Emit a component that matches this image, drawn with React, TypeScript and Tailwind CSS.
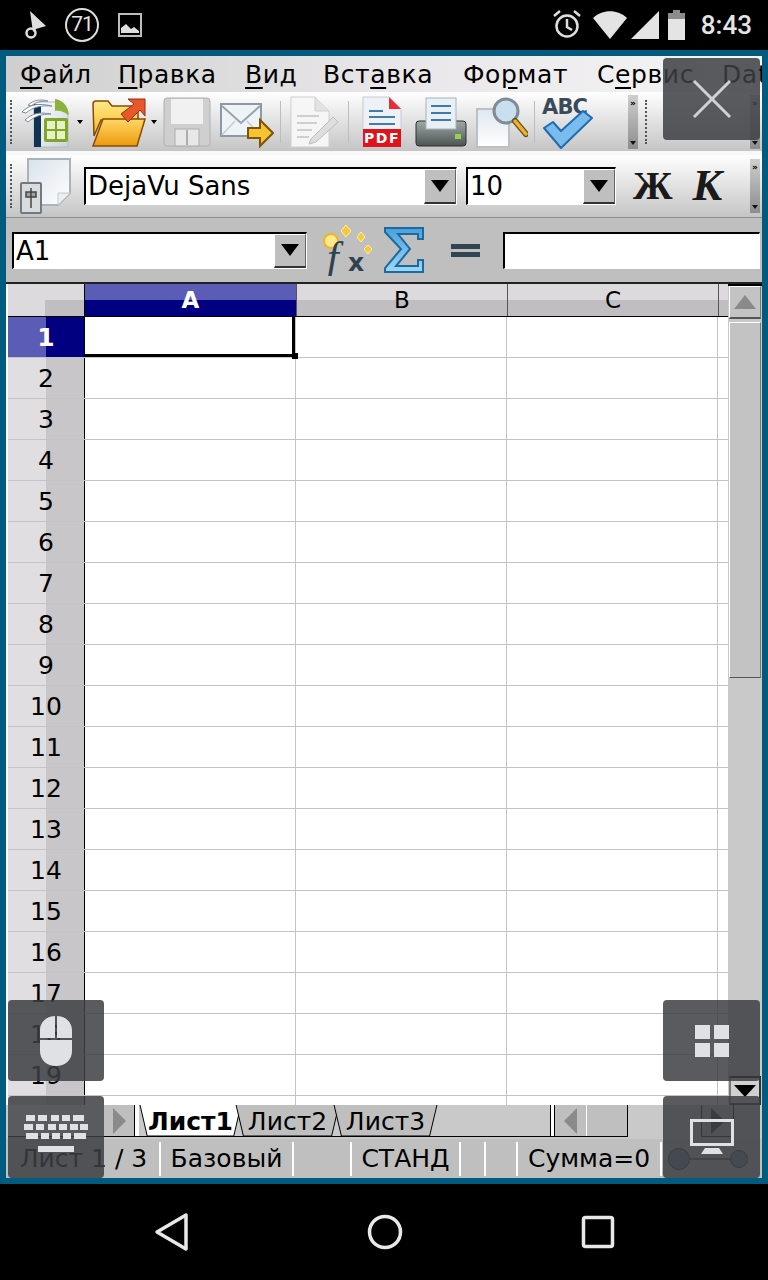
import React from 'react';

const font = 'font-["DejaVu_Sans",sans-serif]';

const rows = Array.from({ length: 20 }, (_, i) => i + 1);

const GridLine = () => <div className="w-[1px] self-stretch bg-[#c4c4c4]" />;

const Triangle = () => (
  <svg width="20" height="14" viewBox="0 0 20 14">
    <path d="M1 1h18L10 13z" fill="#000" />
  </svg>
);

const ComboBox = ({ text, className }: { text: string; className: string }) => (
  <div className={`flex items-stretch border border-t-2 border-l-2 border-t-black border-l-black border-r-white border-b-white bg-white ${className}`}>
    <span className="flex-1 truncate pl-[2px] text-[26px] leading-[34px] text-black">{text}</span>
    <div className="flex w-[32px] items-center justify-center border-b-2 border-r border-t border-l border-b-[#333] border-r-[#666] border-t-white border-l-white bg-[#c0bfc0]">
      <Triangle />
    </div>
  </div>
);

const Grip = () => (
  <div className="h-[44px] w-[2px] border-l-2 border-dotted border-[#555]" />
);

const Sep = () => <div className="h-[42px] w-[1px] bg-[#bdbdbd]" />;

const Overflow = ({ className }: { className: string }) => (
  <div className={`flex w-[10px] flex-col items-center justify-between bg-gradient-to-b from-[#cfcfcf] to-[#8d8d8d] py-[4px] ${className}`}>
    <span className="text-[9px] font-bold leading-[9px] text-black">»</span>
    <svg width="6" height="4" viewBox="0 0 6 4"><path d="M0 0h6L3 4z" fill="#111" /></svg>
  </div>
);

const NewIcon = () => (
  <svg width="52" height="52" viewBox="0 0 52 52">
    <defs>
      <linearGradient id="newPage" x1="0" y1="0" x2="1" y2="1"><stop offset="0" stopColor="#fff" /><stop offset="1" stopColor="#c9d4dc" /></linearGradient>
    </defs>
    <path d="M14 6h22l12 13v32H14z" fill="url(#newPage)" stroke="#b5bcc2" />
    <path d="M14 8h7v43h-7z" fill="#0f3350" />
    <path d="M35 3c8 1 13 7 14 16-5-3-9-5-14-4z" fill="#8bb23c" />
    <path d="M2 16c8-8 16-9 30-6-10-1-19 1-26 7zM5 24c8-7 14-8 26-6-9 0-16 2-23 8zM8 9c6-5 12-6 20-4-7 0-12 1-17 5z" fill="#fff" stroke="#7e8e9c" strokeWidth="1" />
    <rect x="24" y="22" width="24" height="24" rx="2" fill="#7fa52c" />
    <path d="M27 25h8v8h-8zM37 25h8v8h-8zM27 35h8v8h-8zM37 35h8v8h-8z" fill="#e6f1c4" />
  </svg>
);

const FolderIcon = () => (
  <svg width="56" height="52" viewBox="0 0 56 52">
    <defs>
      <linearGradient id="folderA" x1="0" y1="0" x2="0" y2="1"><stop offset="0" stopColor="#ffe98a" /><stop offset="1" stopColor="#f5b81f" /></linearGradient>
      <linearGradient id="folderB" x1="0" y1="0" x2="0" y2="1"><stop offset="0" stopColor="#ffd765" /><stop offset="1" stopColor="#eb9a0d" /></linearGradient>
    </defs>
    <path d="M2 8c0-2 1-3 3-3h12l4 5h26v14H10L3 40z" fill="url(#folderA)" stroke="#8a4a05" strokeWidth="1.5" />
    <path d="M12 23h42l-8 27H2z" fill="url(#folderB)" stroke="#8a4a05" strokeWidth="1.5" />
    <path d="M30 18L43 8l-6-5h17v17l-5-6-12 12z" fill="#e8572a" stroke="#9a2c10" strokeWidth="1" />
  </svg>
);

const SaveIcon = () => (
  <svg width="48" height="50" viewBox="0 0 48 50">
    <rect x="1" y="1" width="46" height="48" rx="3" fill="#cfcfcf" stroke="#b0b0b0" />
    <rect x="8" y="2" width="32" height="25" fill="#f1f1f1" />
    <rect x="12" y="32" width="24" height="17" fill="#e8e8e8" stroke="#adadad" />
    <rect x="23" y="33" width="2" height="15" fill="#adadad" />
  </svg>
);

const MailIcon = () => (
  <svg width="54" height="46" viewBox="0 0 54 46">
    <rect x="1" y="1" width="40" height="32" fill="#eef3f7" stroke="#8c98a2" strokeWidth="2" />
    <path d="M2 3l19 17L40 3" fill="none" stroke="#98a4ae" strokeWidth="2" />
    <path d="M2 32l13-14M40 32L27 18" fill="none" stroke="#c4ccd2" strokeWidth="1.5" />
    <path d="M28 25h12v-8l13 13-13 13v-8H28z" fill="#f7c32f" stroke="#7e5408" strokeWidth="2" />
  </svg>
);

const EditIcon = () => (
  <svg width="50" height="52" viewBox="0 0 50 52">
    <path d="M2 1h24l14 14v36H2z" fill="#f6f6f6" stroke="#cfcfcf" />
    <path d="M26 1v14h14" fill="#e3e3e3" stroke="#cfcfcf" />
    <path d="M8 20h22M8 27h20M8 34h15M8 41h12" stroke="#cfcfcf" strokeWidth="2" />
    <path d="M22 43l22-22 5 5-22 20-7 2z" fill="#dedede" stroke="#bdbdbd" />
  </svg>
);

const PdfIcon = () => (
  <svg width="40" height="52" viewBox="0 0 40 52">
    <path d="M1 1h26l12 12v38H1z" fill="#eef2f6" stroke="#c5ccd2" />
    <path d="M27 1l12 12H27z" fill="#ea2d3a" />
    <path d="M7 15h14M7 21h26M7 28h26" stroke="#3d7eae" strokeWidth="2" />
    <rect x="1" y="33" width="38" height="18" fill="#e0131d" />
    <text x="20" y="47" textAnchor="middle" fontSize="14" fontWeight="700" letterSpacing="1.5" fill="#fff" fontFamily="DejaVu Sans">PDF</text>
  </svg>
);

const PrintIcon = () => (
  <svg width="52" height="50" viewBox="0 0 52 50">
    <defs>
      <linearGradient id="printBody" x1="0" y1="0" x2="0" y2="1"><stop offset="0" stopColor="#a2aaa8" /><stop offset="1" stopColor="#4c5352" /></linearGradient>
    </defs>
    <rect x="1" y="24" width="50" height="25" rx="3" fill="url(#printBody)" stroke="#2c3130" />
    <rect x="11" y="1" width="30" height="31" fill="#e8f0f6" stroke="#a8b2ba" />
    <path d="M16 9h20M16 16h20M16 23h20" stroke="#3f7aa8" strokeWidth="2" />
    <rect x="40" y="37" width="6" height="5" fill="#96d14c" />
  </svg>
);

const PreviewIcon = () => (
  <svg width="52" height="52" viewBox="0 0 52 52">
    <defs>
      <linearGradient id="previewPage" x1="0" y1="0" x2="0" y2="1"><stop offset="0" stopColor="#dfe8f0" /><stop offset="1" stopColor="#fff" /></linearGradient>
    </defs>
    <rect x="1" y="13" width="32" height="38" fill="url(#previewPage)" stroke="#b9c0c6" strokeWidth="2" />
    <circle cx="30" cy="15" r="12" fill="#c9dff0" stroke="#7f8b95" strokeWidth="3" />
    <path d="M39 25l11 13" stroke="#5d4a14" strokeWidth="6" strokeLinecap="round" />
    <path d="M39 25l11 13" stroke="#eeb02c" strokeWidth="3.5" strokeLinecap="round" />
  </svg>
);

const SpellIcon = () => (
  <svg width="54" height="54" viewBox="0 0 54 54">
    <text x="2" y="19" fontSize="21" fontWeight="700" fill="#3a4a5a" fontFamily="DejaVu Sans" textLength="46">ABC</text>
    <path d="M4 33l9-6 8 9L43 16l9 7-31 30z" fill="#7bbcee" stroke="#1f6cb0" strokeWidth="2" strokeLinejoin="round" />
  </svg>
);

const AttrIcon = () => (
  <svg width="54" height="56" viewBox="0 0 54 56">
    <defs>
      <linearGradient id="attrPage" x1="0" y1="0" x2="1" y2="1"><stop offset="0" stopColor="#d9e2ea" /><stop offset="1" stopColor="#fff" /></linearGradient>
    </defs>
    <path d="M8 1h42v34L38 47H8z" fill="url(#attrPage)" stroke="#aab3ba" strokeWidth="2" />
    <path d="M50 35H38v12z" fill="#eceff1" stroke="#c4cad0" />
    <rect x="1" y="25" width="20" height="30" rx="1" fill="#d9dcdd" stroke="#707a80" strokeWidth="2" />
    <path d="M11 30v20M6 34h10v5H6z" fill="#9aa2a6" stroke="#444" strokeWidth="1.5" />
  </svg>
);

const FxIcon = () => (
  <svg width="50" height="52" viewBox="0 0 50 52">
    <circle cx="9" cy="17" r="7" fill="#ffe98a" stroke="#eeb52b" strokeWidth="2" />
    <path d="M24 1l5 6-5 6-5-6zM39 8l4 5-4 5-4-5zM46 21l4 4-4 5-4-5z" fill="#f7c936" stroke="#fff0a8" />
    <text x="5" y="47" fontSize="42" fontStyle="italic" fontFamily="Liberation Serif" fill="#2e4250">f</text>
    <text x="26" y="47" fontSize="25" fontWeight="700" fontFamily="DejaVu Sans" fill="#2e4250">x</text>
  </svg>
);

const SigmaIcon = () => (
  <svg width="40" height="46" viewBox="0 0 40 46">
    <defs>
      <linearGradient id="sigmaFill" x1="0" y1="0" x2="0" y2="1"><stop offset="0" stopColor="#47a1dd" /><stop offset="1" stopColor="#9ed7fa" /></linearGradient>
    </defs>
    <path d="M1 1h38v11h-5V7H14l12 15-14 17h22v-6h5v12H1v-4l16-19L1 5z" fill="url(#sigmaFill)" stroke="#1c6a9e" strokeWidth="2" />
  </svg>
);

const MouseIcon = () => (
  <svg width="34" height="52" viewBox="0 0 34 52">
    <path d="M16 1v22H1v-8C1 7 8 1 16 1zM18 1c8 0 15 6 15 14v8H18zM1 25h32v11c0 9-7 15-16 15S1 45 1 36z" fill="#dfe1e4" />
  </svg>
);

const KeyboardIcon = () => (
  <svg width="64" height="44" viewBox="0 0 64 44">
    <path d="M2 0h9v6H2zM14 0h9v6h-9zM27 0h8v6h-8zM38 0h8v6h-8zM49 0h11v6H49zM0 9h9v6H0zM12 9h8v6h-8zM24 9h8v6h-8zM35 9h8v6h-8zM46 9h8v6h-8zM56 9h8v6h-8zM2 18h12v6H2zM17 18h8v6h-8zM28 18h8v6h-8zM39 18h8v6h-8zM50 18h12v6H50zM14 31h36v6H14z" fill="#dfe1e4" />
  </svg>
);

const MonitorIcon = () => (
  <svg width="44" height="36" viewBox="0 0 44 36">
    <rect x="1.5" y="1.5" width="41" height="24" fill="none" stroke="#dfe1e4" strokeWidth="3" />
    <path d="M11 35l4-6h14l4 6z" fill="#dfe1e4" />
  </svg>
);

const Overlay = ({ className, children }: { className: string; children: React.ReactNode }) => (
  <div className={`absolute flex items-center justify-center rounded-[4px] bg-[#3c3e42]/85 ${className}`}>{children}</div>
);

const Tab = ({ label, active, width }: { label: string; active?: boolean; width: string }) => (
  <div className={`relative -mr-[7px] flex h-[32px] items-center justify-center ${width}`}>
    <svg className="absolute inset-0 h-full w-full" viewBox="0 0 100 32" preserveAspectRatio="none">
      <path d="M1 0L8 31H92L99 0" fill={active ? '#fff' : '#c0bfc0'} stroke="#000" strokeWidth="1" vectorEffect="non-scaling-stroke" />
    </svg>
    <span className={`relative text-[25px] leading-none text-black ${active ? 'font-bold' : ''}`}>{label}</span>
  </div>
);

const StatusCell = ({ width, children }: { width: string; children?: React.ReactNode }) => (
  <div className={`flex h-[34px] shrink-0 items-center justify-center border-r-2 border-white text-[25px] leading-none text-black ${width}`}>{children}</div>
);

const MenuItem = ({ before, mark, after, width }: { before?: string; mark: string; after: string; width: string }) => (
  <span className={`shrink-0 whitespace-nowrap ${width}`}>
    {before}<span className="underline decoration-2 underline-offset-[4px]">{mark}</span>{after}
  </span>
);

export default function App() {
  return (
    <div className={`relative h-[1280px] w-[768px] overflow-hidden bg-black ${font}`}>
      {/* android status bar */}
      <div className="flex h-[50px] items-center pl-[24px] pr-[16px] font-['Roboto',sans-serif] text-[#e4e4e4]">
        <svg width="24" height="30" viewBox="0 0 24 30">
          <path d="M6 1l16 15-10 3-3 3z" fill="#dedede" />
          <circle cx="7" cy="23" r="4.5" fill="none" stroke="#dedede" strokeWidth="2.5" />
        </svg>
        <div className="ml-[17px] flex h-[34px] w-[34px] items-center justify-center rounded-full border-2 border-[#dedede] text-[21px] tracking-[-1px]">71</div>
        <svg className="ml-[19px]" width="24" height="24" viewBox="0 0 24 24">
          <rect x="1" y="1" width="22" height="22" fill="none" stroke="#bdbdbd" strokeWidth="2" />
          <path d="M3 20v-5l5-4 5 5 3-2 5 4v2z" fill="#dedede" />
        </svg>
        <svg className="ml-auto" width="28" height="30" viewBox="0 0 28 30">
          <circle cx="14" cy="16" r="10.5" fill="none" stroke="#dedede" strokeWidth="2.5" />
          <path d="M14 9v8l5 3M1 6l6-5M27 6l-6-5" fill="none" stroke="#dedede" strokeWidth="2.5" />
        </svg>
        <svg className="ml-[12px]" width="34" height="28" viewBox="0 0 34 28"><path d="M0 7C9-2 25-2 34 7L17 28z" fill="#e4e4e4" /></svg>
        <svg className="ml-[4px]" width="28" height="28" viewBox="0 0 28 28"><path d="M0 28L28 0v28z" fill="#e4e4e4" /></svg>
        <svg className="ml-[8px]" width="20" height="30" viewBox="0 0 20 30">
          <path d="M6 0h7v3h5v27H1V3h5z" fill="#e4e4e4" />
          <path d="M6 0h7v3h5v6H1V3h5z" fill="#8c8c8c" />
        </svg>
        <span className="ml-[14px] text-[26px] font-medium leading-none">8:43</span>
      </div>

      {/* libreoffice window */}
      <div className="h-[1134px] bg-[#005b7f] p-[6px]">
        <div className="flex h-full flex-col overflow-hidden bg-[#c0bfc0]">
          <div className="flex h-[36px] shrink-0 items-center overflow-hidden bg-gradient-to-r from-[#cfcfcf] via-[#e8e6e8] to-[#f6f5f6] pl-[14px] text-[25px] leading-none tracking-[0.6px] text-black">
            <MenuItem mark="Ф" after="айл" width="w-[98px]" />
            <MenuItem mark="П" after="равка" width="w-[127px]" />
            <MenuItem mark="В" after="ид" width="w-[78px]" />
            <MenuItem before="Вст" mark="а" after="вка" width="w-[140px]" />
            <MenuItem before="Фо" mark="р" after="мат" width="w-[134px]" />
            <MenuItem before="С" mark="е" after="рвис" width="w-[125px]" />
            <MenuItem before="Dat" mark="a" after="" width="w-[60px]" />
          </div>

          <div className="flex h-[63px] shrink-0 items-center border-b-[4px] border-[#f8f8f8] bg-gradient-to-b from-[#ffffff] to-[#c6c5c6] pl-[4px] relative">
            <Grip />
            <div className="ml-[8px]"><NewIcon /></div>
            <svg className="ml-[5px]" width="6" height="4" viewBox="0 0 6 4"><path d="M0 0h6L3 4z" /></svg>
            <div className="ml-[8px]"><FolderIcon /></div>
            <svg className="ml-[4px]" width="6" height="4" viewBox="0 0 6 4"><path d="M0 0h6L3 4z" /></svg>
            <div className="ml-[6px]"><SaveIcon /></div>
            <div className="ml-[9px] mt-[8px]"><MailIcon /></div>
            <div className="ml-[6px]"><Sep /></div>
            <div className="ml-[8px]"><EditIcon /></div>
            <div className="ml-[9px]"><Sep /></div>
            <div className="ml-[13px]"><PdfIcon /></div>
            <div className="ml-[13px]"><PrintIcon /></div>
            <div className="ml-[9px]"><PreviewIcon /></div>
            <div className="ml-[6px]"><Sep /></div>
            <div className="ml-[5px]"><SpellIcon /></div>
            <Overflow className="ml-[34px] h-[54px]" />
            <div className="ml-[7px]"><Grip /></div>
            <Overflow className="ml-auto mr-[2px] h-[54px]" />
          </div>

          <div className="flex h-[63px] shrink-0 items-center border-b border-[#8e8e8e] bg-gradient-to-b from-[#ffffff] to-[#c6c5c6] pl-[4px]">
            <Grip />
            <div className="ml-[8px]"><AttrIcon /></div>
            <ComboBox text="DejaVu Sans" className="ml-[10px] h-[38px] w-[373px]" />
            <ComboBox text="10" className="ml-[9px] h-[38px] w-[150px]" />
            <span className="ml-[17px] font-['Liberation_Serif',serif] text-[40px] font-bold leading-none text-[#1a1a1a]">Ж</span>
            <span className="ml-[20px] font-['Liberation_Serif',serif] text-[44px] font-bold italic leading-none text-[#1a1a1a]">К</span>
            <Overflow className="ml-auto mr-[2px] h-[54px]" />
          </div>

          <div className="flex h-[66px] shrink-0 items-center border-b-2 border-[#222] bg-[#c0bfc0] pl-[6px]">
            <ComboBox text="A1" className="h-[37px] w-[295px]" />
            <div className="ml-[15px]"><FxIcon /></div>
            <div className="ml-[12px]"><SigmaIcon /></div>
            <div className="ml-[27px] flex w-[29px] flex-col gap-[3px]">
              <div className="h-[5px] bg-[#31444f]" />
              <div className="h-[5px] bg-[#31444f]" />
            </div>
            <div className="ml-[23px] h-[37px] w-[257px] border border-t-2 border-l-2 border-t-black border-l-black border-r-white border-b-white bg-white" />
          </div>

          {/* sheet */}
          <div className="flex h-[821px] shrink-0 overflow-hidden bg-white pl-[2px]">
            <div className="flex w-[720px] shrink-0 flex-col overflow-hidden">
              <div className="flex h-[33px] shrink-0 border-b border-black text-[23px] leading-none">
                <div className="relative w-[77px] shrink-0 border-r border-black bg-[#dcdadc]">
                  <div className="absolute bottom-0 right-0 h-[16px] w-[39px] bg-[#c0bec0]" />
                </div>
                <div className="relative flex w-[211px] shrink-0 items-center justify-center bg-[linear-gradient(#5a5cb5_50%,#000080_50%)] font-bold text-white">A</div>
                <div className="flex w-[211px] shrink-0 items-center justify-center border-l border-[#555] bg-[linear-gradient(#dcdadc_50%,#c0bec0_50%)] text-black">B</div>
                <div className="flex w-[211px] shrink-0 items-center justify-center border-l border-[#555] bg-[linear-gradient(#dcdadc_50%,#c0bec0_50%)] text-black">C</div>
                <div className="flex-1 border-l border-[#555] bg-[linear-gradient(#dcdadc_50%,#c0bec0_50%)]" />
              </div>
              {rows.map((row) => (
                <div key={row} className="flex h-[41px] shrink-0 border-b border-[#c4c4c4]">
                  <div className={`flex w-[77px] shrink-0 items-center justify-center border-r border-black text-[25px] leading-none ${row === 1 ? 'bg-[linear-gradient(90deg,#5a5cb5_50%,#000080_50%)] font-bold text-white' : 'bg-[linear-gradient(90deg,#e0dee0_50%,#c8c6c8_50%)] text-black'}`}>
                    {row}
                  </div>
                  <div className={`relative w-[210px] shrink-0 ${row === 1 ? 'border-b-[3px] border-r-[3px] border-black' : ''}`}>
                    {row === 1 && <div className="absolute -bottom-[5px] -right-[6px] h-[6px] w-[6px] bg-black" />}
                  </div>
                  <GridLine />
                  <div className="w-[210px] shrink-0" />
                  <GridLine />
                  <div className="w-[210px] shrink-0" />
                  <GridLine />
                </div>
              ))}
            </div>
            <div className="flex w-[34px] shrink-0 flex-col border-t-2 border-black bg-[#c9c9c9]">
              <div className="ml-[1px] flex h-[33px] w-[32px] shrink-0 items-center justify-center border-b-2 border-r border-t border-l border-[#fff] border-b-[#555] border-r-[#777] bg-[#c4c3c4]">
                <svg width="22" height="14" viewBox="0 0 22 14"><path d="M0 14L11 0l11 14z" fill="#8a8a8a" /></svg>
              </div>
              <div className="ml-[1px] mt-[3px] h-[356px] w-[32px] shrink-0 border border-[#fff] border-b-[#555] border-r-[#777] bg-[#c4c3c4]" />
              <div className="ml-[1px] mt-auto flex h-[29px] w-[32px] shrink-0 items-center justify-center border-2 border-t-black border-l-[#777] border-r-[#333] border-b-[#333] bg-[#d0d0d0]">
                <svg width="22" height="12" viewBox="0 0 22 12"><path d="M0 0h22L11 12z" fill="#000" /></svg>
              </div>
            </div>
          </div>

          {/* tabs */}
          <div className="flex h-[34px] shrink-0 bg-[#c9c9c9] pl-[2px]">
            <div className="flex h-[32px] w-[128px] shrink-0 items-center justify-end border-b border-black bg-white pr-[1px]">
              <div className="flex h-[31px] w-[31px] items-center justify-center border-r border-black bg-[#c0bfc0]">
                <svg width="15" height="26" viewBox="0 0 15 26"><path d="M1 0l13 13L1 26z" fill="#8a8a8a" /></svg>
              </div>
            </div>
            <div className="flex h-[32px] w-[414px] shrink-0 border-b border-black">
              <div className="h-full w-[3px] shrink-0 bg-white" />
              <Tab label="Лист1" active width="w-[103px]" />
              <Tab label="Лист2" width="w-[105px]" />
              <Tab label="Лист3" width="w-[105px]" />
              <div className="relative z-[-1] flex-1 bg-[#c0bfc0]" />
            </div>
            <div className="flex h-[32px] shrink-0 border-b border-black">
              <div className="w-[5px] border-x border-black bg-white" />
              <div className="flex w-[32px] items-center justify-center border-r border-white bg-[#c0bfc0]">
                <svg width="13" height="26" viewBox="0 0 13 26"><path d="M13 0L0 13l13 13z" fill="#8a8a8a" /></svg>
              </div>
              <div className="w-[41px] border-r border-black bg-[#c0bfc0]" />
            </div>
            <div className="ml-[73px] flex h-[32px] w-[33px] items-center justify-center border-x border-b border-black bg-[#c0bfc0]">
              <svg width="14" height="26" viewBox="0 0 14 26"><path d="M0 0l14 13L0 26z" fill="#333" /></svg>
            </div>
          </div>

          {/* status bar */}
          <div className="flex flex-1 items-center bg-[#c0bfc0] pl-[2px]">
            <StatusCell width="w-[153px]">Лист 1 / 3</StatusCell>
            <StatusCell width="w-[133px]">Базовый</StatusCell>
            <StatusCell width="w-[58px]" />
            <StatusCell width="w-[109px]">СТАНД</StatusCell>
            <StatusCell width="w-[25px]" />
            <StatusCell width="w-[32px]" />
            <StatusCell width="w-[144px]">Сумма=0</StatusCell>
            <div className="relative ml-[6px] h-[24px] w-[80px] shrink-0">
              <div className="absolute left-[10px] right-[10px] top-[11px] h-[2px] bg-[#666]" />
              <div className="absolute left-0 top-[1px] h-[22px] w-[22px] rounded-full border border-[#333] bg-[#6b8aa0]" />
              <div className="absolute right-0 top-[3px] h-[18px] w-[18px] rounded-full border border-[#333] bg-[#6b8aa0]" />
            </div>
          </div>
        </div>
      </div>

      {/* android nav bar */}
      <div className="flex h-[96px] items-center justify-around px-[64px]">
        <svg width="36" height="40" viewBox="0 0 36 40"><path d="M33 3v34L4 20z" fill="none" stroke="#e8e8e8" strokeWidth="3.5" strokeLinejoin="round" /></svg>
        <svg width="36" height="36" viewBox="0 0 36 36"><circle cx="18" cy="18" r="15.5" fill="none" stroke="#e8e8e8" strokeWidth="3.5" /></svg>
        <svg width="34" height="34" viewBox="0 0 34 34"><rect x="2.5" y="2.5" width="29" height="29" rx="2" fill="none" stroke="#e8e8e8" strokeWidth="3.5" /></svg>
      </div>

      {/* floating vnc controls */}
      <Overlay className="left-[663px] top-[58px] h-[82px] w-[97px]">
        <svg width="40" height="40" viewBox="0 0 40 40"><path d="M2 2l36 36M38 2L2 38" stroke="#cfd1d4" strokeWidth="3" /></svg>
      </Overlay>
      <Overlay className="left-[8px] top-[1000px] h-[81px] w-[96px]"><MouseIcon /></Overlay>
      <Overlay className="left-[663px] top-[1000px] h-[81px] w-[97px]">
        <div className="grid grid-cols-2 gap-[4px]">
          <div className="h-[14px] w-[15px] bg-[#dfe1e4]" />
          <div className="h-[14px] w-[15px] bg-[#dfe1e4]" />
          <div className="h-[14px] w-[15px] bg-[#dfe1e4]" />
          <div className="h-[14px] w-[15px] bg-[#dfe1e4]" />
        </div>
      </Overlay>
      <Overlay className="left-[8px] top-[1096px] h-[82px] w-[96px]"><KeyboardIcon /></Overlay>
      <Overlay className="left-[663px] top-[1096px] h-[82px] w-[97px]"><MonitorIcon /></Overlay>
    </div>
  );
}
